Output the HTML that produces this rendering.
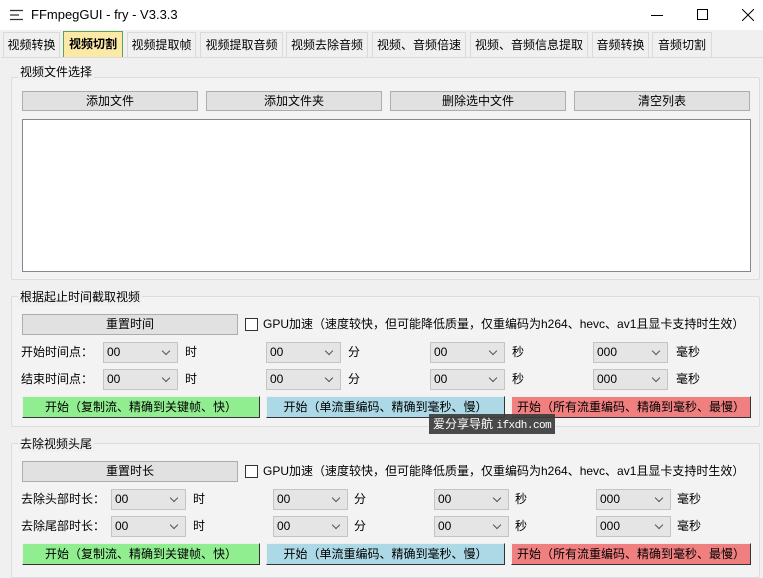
<!DOCTYPE html>
<html><head><meta charset="utf-8"><style>
*{box-sizing:border-box;margin:0;padding:0}
body{width:763px;height:573px;overflow:hidden;background:#f0f0f0;font-family:"Liberation Sans","Noto Sans CJK SC",sans-serif;font-size:12px;color:#000;position:relative}
.a{position:absolute}
.title{left:0;top:0;width:763px;height:30px;background:#fff}
.tab{position:absolute;top:32px;height:25px;border:1px solid #dadada;border-bottom:none;background:#f0f0f0;text-align:center;line-height:24px;white-space:nowrap}
.tab.on{background:#fbe9a6;border:1px solid #5aa45a;border-bottom:none;font-weight:bold;top:31px;height:27px}
.grp{position:absolute;border:1px solid #dcdcdc;background:#f3f3f3;border-radius:2px}
.gt{position:absolute;background:#f0f0f0;padding:0 2px;font-size:12px}
.btn{position:absolute;background:#e1e1e1;border:1px solid #adadad;text-align:center;line-height:18px}
.cb{position:absolute;background:#e5e5e5;border:1px solid #c4c4c4;height:21px;width:75px;line-height:19px;padding-left:3px}
.cb:after{content:"";position:absolute;right:8px;top:5px;width:5px;height:5px;border-right:1px solid #555;border-bottom:1px solid #555;transform:rotate(45deg)}
.lb{position:absolute;line-height:21px}
.go{position:absolute;height:22px;line-height:20px;text-align:center;border:1px solid;border-color:#eee #333 #333 #eee}
.g{background:#90ee90}.b{background:#add8e6}.r{background:#f08080}
.chk{position:absolute;width:13px;height:13px;border:1px solid #333;background:#fff}
</style></head><body>
<div class="a title"></div>
<svg class="a" style="left:10px;top:9px" width="14" height="12"><path d="M0 1.5H13M0 6H9M0 10.5H13" stroke="#333" stroke-width="1.3"/></svg>
<div class="a" style="left:31px;top:7px;font-size:13px">FFmpegGUI - fry - V3.3.3</div>
<div class="a" style="left:651px;top:15px;width:12px;height:1px;background:#000"></div>
<div class="a" style="left:697px;top:9px;width:11px;height:11px;border:1px solid #000"></div>
<svg class="a" style="left:742px;top:9px" width="12" height="12"><path d="M0 0L12 12M12 0L0 12" stroke="#000"/></svg>

<div class="tab" style="left:3px;width:57px">视频转换</div>
<div class="tab on" style="left:63px;width:60px">视频切割</div>
<div class="tab" style="left:127px;width:69px">视频提取帧</div>
<div class="tab" style="left:200px;width:83px">视频提取音频</div>
<div class="tab" style="left:286px;width:82px">视频去除音频</div>
<div class="tab" style="left:372px;width:94px">视频、音频倍速</div>
<div class="tab" style="left:470px;width:118px">视频、音频信息提取</div>
<div class="tab" style="left:592px;width:57px">音频转换</div>
<div class="tab" style="left:652px;width:60px">音频切割</div>
<div class="a" style="left:1px;top:57px;width:762px;height:1px;background:#dadada"></div>

<div class="grp" style="left:11px;top:77px;width:749px;height:203px"></div>
<div class="gt" style="left:18px;top:63px">视频文件选择</div>
<div class="btn" style="left:22px;top:91px;width:176px;height:20px">添加文件</div>
<div class="btn" style="left:206px;top:91px;width:176px;height:20px">添加文件夹</div>
<div class="btn" style="left:390px;top:91px;width:176px;height:20px">删除选中文件</div>
<div class="btn" style="left:574px;top:91px;width:176px;height:20px">清空列表</div>
<div class="a" style="left:22px;top:119px;width:729px;height:153px;background:#fff;border:1px solid #828790"></div>

<div class="grp" style="left:11px;top:296px;width:749px;height:131px"></div>
<div class="gt" style="left:18px;top:288px">根据起止时间截取视频</div>
<div class="btn" style="left:22px;top:314px;width:216px;height:21px">重置时间</div>
<div class="chk" style="left:245px;top:318px"></div>
<div class="lb" style="left:263px;top:314px">GPU加速（速度较快，但可能降低质量，仅重编码为h264、hevc、av1且显卡支持时生效）</div>
<div class="lb" style="left:21px;top:342px">开始时间点：</div>
<div class="cb" style="left:103px;top:342px">00</div><div class="lb" style="left:185px;top:342px">时</div>
<div class="cb" style="left:266px;top:342px">00</div><div class="lb" style="left:348px;top:342px">分</div>
<div class="cb" style="left:430px;top:342px">00</div><div class="lb" style="left:512px;top:342px">秒</div>
<div class="cb" style="left:593px;top:342px">000</div><div class="lb" style="left:676px;top:342px">毫秒</div>
<div class="lb" style="left:21px;top:369px">结束时间点：</div>
<div class="cb" style="left:103px;top:369px">00</div><div class="lb" style="left:185px;top:369px">时</div>
<div class="cb" style="left:266px;top:369px">00</div><div class="lb" style="left:348px;top:369px">分</div>
<div class="cb" style="left:430px;top:369px">00</div><div class="lb" style="left:512px;top:369px">秒</div>
<div class="cb" style="left:593px;top:369px">000</div><div class="lb" style="left:676px;top:369px">毫秒</div>
<div class="go g" style="left:22px;top:396px;width:238px">开始（复制流、精确到关键帧、快）</div>
<div class="go b" style="left:266px;top:396px;width:239px">开始（单流重编码、精确到毫秒、慢）</div>
<div class="go r" style="left:511px;top:396px;width:240px">开始（所有流重编码、精确到毫秒、最慢）</div>

<div class="grp" style="left:11px;top:443px;width:749px;height:135px"></div>
<div class="gt" style="left:18px;top:435px">去除视频头尾</div>
<div class="btn" style="left:22px;top:461px;width:216px;height:21px">重置时长</div>
<div class="chk" style="left:245px;top:465px"></div>
<div class="lb" style="left:263px;top:461px">GPU加速（速度较快，但可能降低质量，仅重编码为h264、hevc、av1且显卡支持时生效）</div>
<div class="lb" style="left:21px;top:489px">去除头部时长：</div>
<div class="cb" style="left:111px;top:489px">00</div><div class="lb" style="left:193px;top:489px">时</div>
<div class="cb" style="left:273px;top:489px">00</div><div class="lb" style="left:354px;top:489px">分</div>
<div class="cb" style="left:434px;top:489px">00</div><div class="lb" style="left:515px;top:489px">秒</div>
<div class="cb" style="left:596px;top:489px">000</div><div class="lb" style="left:677px;top:489px">毫秒</div>
<div class="lb" style="left:21px;top:516px">去除尾部时长：</div>
<div class="cb" style="left:111px;top:516px">00</div><div class="lb" style="left:193px;top:516px">时</div>
<div class="cb" style="left:273px;top:516px">00</div><div class="lb" style="left:354px;top:516px">分</div>
<div class="cb" style="left:434px;top:516px">00</div><div class="lb" style="left:515px;top:516px">秒</div>
<div class="cb" style="left:596px;top:516px">000</div><div class="lb" style="left:677px;top:516px">毫秒</div>
<div class="go g" style="left:22px;top:543px;width:238px">开始（复制流、精确到关键帧、快）</div>
<div class="go b" style="left:266px;top:543px;width:239px">开始（单流重编码、精确到毫秒、慢）</div>
<div class="go r" style="left:511px;top:543px;width:240px">开始（所有流重编码、精确到毫秒、最慢）</div>

<div class="a" style="left:429px;top:414px;height:20px;background:rgba(60,60,60,.92);color:#fff;line-height:20px;padding:0 4px;font-size:12px;white-space:nowrap">爱分享导航 <span style="font-family:'Liberation Mono',monospace;font-size:11px;letter-spacing:-0.5px">ifxdh.com</span></div>
</body></html>
